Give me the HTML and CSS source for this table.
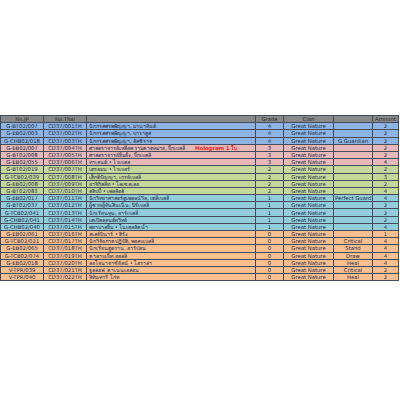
FILE: index.html
```html
<!DOCTYPE html>
<html lang="th">
<head>
<meta charset="utf-8">
<title>Great Nature list</title>
<link rel="stylesheet" href="styles.css">
</head>
<body>
<div class="sheet">
<table class="grid">
<colgroup>
<col class="c-jp"><col class="c-th"><col class="c-name"><col class="c-grade"><col class="c-clan"><col class="c-extra"><col class="c-amt">
</colgroup>
<thead>
<tr class="head"><th>No.JP</th><th>No.Thai</th><th></th><th>Grade</th><th>Clan</th><th></th><th>Amount</th></tr>
</thead>
<tbody>
<tr class="g4"><td>G-BT02/007</td><td>CD37/001TH</td><td class="name">นักกรสศรพพัญญา, มานาทันต์</td><td>4</td><td>Great Nature</td><td></td><td>2</td></tr>
<tr class="g4"><td>G-EB02/003</td><td>CD37/002TH</td><td class="name">นักกรสศรพพัญญา, บาราดูส</td><td>4</td><td>Great Nature</td><td></td><td>2</td></tr>
<tr class="g4"><td>G-CHB02/018</td><td>CD37/003TH</td><td class="name">นักกรสศรพพัญญา, ลัสซิราจ</td><td>4</td><td>Great Nature</td><td>G Guardian</td><td>2</td></tr>
<tr class="g3"><td>G-EB02/007</td><td>CD37/004TH</td><td class="name">ศาสตราจารย์เหลือความคาดหมาย, บิ๊กเบลลี่ <span class="holo">Hologram 1 ใบ</span></td><td>3</td><td>Great Nature</td><td></td><td>2</td></tr>
<tr class="g3"><td>G-BT02/008</td><td>CD37/005TH</td><td class="name">ศาสตราจารย์ยิ้มยั้ง, บิ๊กเบลลี่</td><td>3</td><td>Great Nature</td><td></td><td>2</td></tr>
<tr class="g3"><td>G-EB02/055</td><td>CD37/006TH</td><td class="name">ทาเลนต์ • ไวเบลล</td><td>3</td><td>Great Nature</td><td></td><td>4</td></tr>
<tr class="g2"><td>G-BT02/019</td><td>CD37/007TH</td><td class="name">เดรอมน • ไวเบอร์</td><td>2</td><td>Great Nature</td><td></td><td>2</td></tr>
<tr class="g2"><td>G-TCB02/039</td><td>CD37/008TH</td><td class="name">เด็กดีปัญญา, เกรย์เบลลี่</td><td>2</td><td>Great Nature</td><td></td><td>3</td></tr>
<tr class="g2"><td>G-EB02/008</td><td>CD37/009TH</td><td class="name">อาจิกิสลีท • ไลเซลเลอ</td><td>2</td><td>Great Nature</td><td></td><td>2</td></tr>
<tr class="g2"><td>G-BT02/083</td><td>CD37/010TH</td><td class="name">สลิปปี้ • เพลลัตส์</td><td>2</td><td>Great Nature</td><td></td><td>4</td></tr>
<tr class="g1"><td>G-EB02/017</td><td>CD37/011TH</td><td class="name">นักวิทยาศาสตร์ดูเพลลน์วิล, เดลีเบลลี่</td><td>1</td><td>Great Nature</td><td>Perfect Guard</td><td>4</td></tr>
<tr class="g1"><td>G-BT02/037</td><td>CD37/012TH</td><td class="name">ผู้ช่วยผู้ทันสินเนิ้น, มิรีเบลลี่</td><td>1</td><td>Great Nature</td><td></td><td>2</td></tr>
<tr class="g1"><td>G-TCB02/041</td><td>CD37/013TH</td><td class="name">นักเรียนทุน, อาร์เบลลี่</td><td>1</td><td>Great Nature</td><td></td><td>2</td></tr>
<tr class="g1"><td>G-CHB02/041</td><td>CD37/014TH</td><td class="name">เดเปิลลลนต์ยวิทย์</td><td>1</td><td>Great Nature</td><td></td><td>2</td></tr>
<tr class="g1"><td>G-CHB02/040</td><td>CD37/015TH</td><td class="name">พยาบาลยิ้ม • โนเฮลล์คน้า</td><td>1</td><td>Great Nature</td><td></td><td>4</td></tr>
<tr class="g0"><td>G-EB02/061</td><td>CD37/016TH</td><td class="name">สเลย์บินาร์ • ดิรัง</td><td>0</td><td>Great Nature</td><td></td><td>1</td></tr>
<tr class="g0"><td>G-TCB02/021</td><td>CD37/017TH</td><td class="name">นักวิจัยภาคปฏิบัติ, พอลบเบลลี่</td><td>0</td><td>Great Nature</td><td>Critical</td><td>4</td></tr>
<tr class="g0"><td>G-EB02/065</td><td>CD37/018TH</td><td class="name">นักเรียนดูตวาน, อาร์ปอน</td><td>0</td><td>Great Nature</td><td>Stand</td><td>4</td></tr>
<tr class="g0"><td>G-TCB02/074</td><td>CD37/019TH</td><td class="name">คาลาบเบ็ท ออลลี่</td><td>0</td><td>Great Nature</td><td>Draw</td><td>4</td></tr>
<tr class="g0"><td>G-EB02/018</td><td>CD37/020TH</td><td class="name">ลอโจนาจาซีย์ลน์ • ไอราล่า</td><td>0</td><td>Great Nature</td><td>Heal</td><td>4</td></tr>
<tr class="g0"><td>V-TPR/039</td><td>CD37/021TH</td><td class="name">ฐูลลอฟ คาเนนเอล่อน</td><td>0</td><td>Great Nature</td><td>Critical</td><td>2</td></tr>
<tr class="g0"><td>V-TPR/040</td><td>CD37/022TH</td><td class="name">ลิทันทารี ไก่ท</td><td>0</td><td>Great Nature</td><td>Heal</td><td>2</td></tr>
</tbody>
</table>
</div>
</body>
</html>
```
FILE: styles.css
```css
html, body {
  margin: 0;
  padding: 0;
  background: #ffffff;
}
.sheet {
  padding-top: 115px;
  width: 398px;
}
.grid {
  border-collapse: collapse;
  table-layout: fixed;
  width: 398px;
  font-family: "DejaVu Sans", "Noto Sans", sans-serif;
  font-size: 5.3px;
  color: #1c2a4a;
}
.c-jp { width: 43px; }
.c-th { width: 43px; }
.c-name { width: 169px; }
.c-grade { width: 28px; }
.c-clan { width: 50px; }
.c-extra { width: 39px; }
.c-amt { width: 26px; }
.grid th, .grid td {
  height: 6.2px;
  padding: 0 1px;
  line-height: 6px;
  border: 1px solid #444b5a;
  text-align: center;
  white-space: nowrap;
  overflow: hidden;
  font-weight: normal;
}
.grid td.name {
  text-align: left;
  padding-left: 2px;
}
.head th {
  background: #8a8a8a;
  color: #2a2a2a;
}
.g4 td { background: #8db4e2; }
.g3 td { background: #e6b8b7; }
.g2 td { background: #c4d79b; }
.g1 td { background: #92cddc; }
.g0 td { background: #fabf8f; }
.holo {
  color: #ff1a1a;
  font-weight: bold;
  margin-left: 8px;
}
```
